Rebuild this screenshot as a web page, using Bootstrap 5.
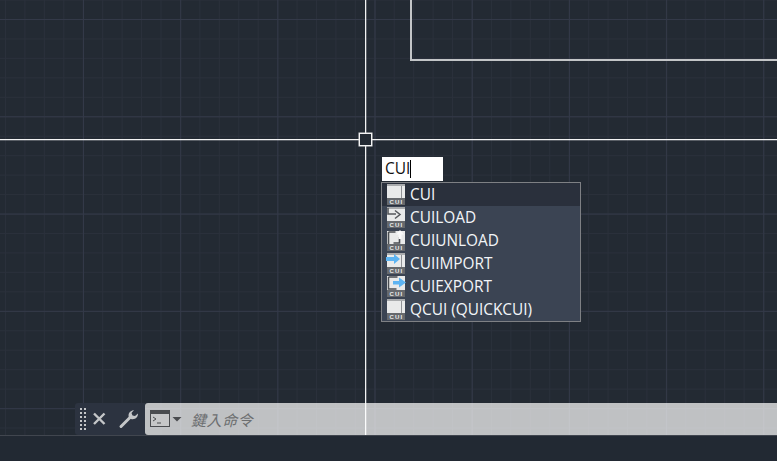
<!DOCTYPE html>
<html lang="zh-Hant">
<head>
<meta charset="utf-8">
<title>CUI</title>
<link href="https://cdn.jsdelivr.net/npm/bootstrap@5.3.0/dist/css/bootstrap.min.css" rel="stylesheet">
<style>
html,body{height:100%;margin:0;overflow:hidden;background:#222933}
body{font-family:"Open Sans","Noto Sans",sans-serif}
.cad-canvas{height:435px;position:relative;overflow:hidden;background-color:#232a33;
 background-image:
  linear-gradient(to right,#333948 1px,transparent 1px),
  linear-gradient(to bottom,#333948 1px,transparent 1px),
  linear-gradient(to right,#2a303b 1px,transparent 1px),
  linear-gradient(to bottom,#2a303b 1px,transparent 1px);
 background-size:97.2px 100%,100% 97.3px,19.44px 100%,100% 19.46px;
 background-position:83px 0,0 19px,5px 0,0 19px}
.cad-status{height:26px;background:#222933;border-top:1px solid #41464f}
.cad-rect{position:absolute;left:410px;top:-4px;width:400px;height:65px;border:2px solid #c3c5c7}
.cross-h{position:absolute;left:0;right:0;top:139px;height:1px;background:#f2f3f3;box-shadow:0 1px 0 rgba(255,255,255,.25)}
.cross-v{position:absolute;top:0;bottom:0;left:365px;width:1px;background:#f2f3f3;box-shadow:1px 0 0 rgba(255,255,255,.25)}
.pick-box{position:absolute;left:359px;top:133px;width:13px;height:13px;border:1px solid #f4f4f4;background:#232a33;box-shadow:0 0 0 .5px #dfe0e1}
.dyn-input{position:absolute;left:382px;top:157px;width:61px;height:24px;background:#fff;color:#111;font-size:15.5px;line-height:23px;padding-left:3px}
.dyn-input i{display:inline-block;width:1px;height:18px;background:#000;vertical-align:-4px}
.suggest{position:absolute;left:381px;top:182px;width:200px;height:140px;border:1px solid #7e8084;border-radius:0;background:#3b4453;--bs-list-group-bg:transparent;overflow:hidden}
.suggest .list-group-item{height:23px;padding:0 0 0 4px;border:0;background:transparent;color:#f2f5f8;font-size:15.4px;line-height:23px;display:flex;align-items:center;gap:4px}
.suggest .list-group-item.on{background:#2a303c}
.suggest svg{flex:none;display:block}
.cad-cmd{position:absolute;left:75px;right:0;top:403px;height:32px;display:flex}
.cmd-handle{width:70px;background:#2c3340;border-radius:3px 0 0 3px;position:relative;flex:none}
.cmd-handle svg{position:absolute;left:0;top:0}
.cmd-field{flex:1;background:rgba(255,255,255,.71);border-radius:3px 0 0 3px;display:flex;align-items:center;padding-left:5px}
.cmd-hint{font-family:"Noto Sans CJK TC","Noto Sans",sans-serif;font-style:italic;font-size:15px;letter-spacing:.6px;color:#6c6e70;margin-left:9px;line-height:1}
.cui-tag{font:700 6px "Liberation Sans",sans-serif;letter-spacing:1.2px;fill:#eceded}
</style>
</head>
<body>
<main class="cad-canvas">
 <div class="cad-rect"></div>
 <div class="cross-h"></div>
 <div class="cross-v"></div>
 <div class="pick-box"></div>
 <div class="dyn-input">CUI<i></i></div>
 <ul class="list-group suggest">
  <li class="list-group-item on"><svg width="20" height="21"><rect x="1" y="0" width="18" height="14" fill="#e9eaea"/><rect x="1" y="0" width="18" height="2" fill="#a9abad"/><rect x="15" y="2" width="1" height="12" fill="#8f9195"/><rect x="1" y="14" width="18" height="7" fill="#66696d"/><text x="3.500" y="19.500" class="cui-tag">CUI</text></svg>CUI</li>
  <li class="list-group-item"><svg width="20" height="21"><rect x="1" y="0" width="18" height="14" fill="#e9eaea"/><rect x="1" y="0" width="18" height="2" fill="#a9abad"/><rect x="1" y="14" width="18" height="7" fill="#66696d"/><text x="3.500" y="19.500" class="cui-tag">CUI</text><path d="M2 1v6h8" fill="none" stroke="#55585c" stroke-width="1.600"/><path d="M9 3.500 14 7.500 9 11.500" fill="none" stroke="#55585c" stroke-width="1.500"/></svg>CUILOAD</li>
  <li class="list-group-item"><svg width="20" height="21"><rect x="1" y="1" width="18" height="13" fill="#e9eaea"/><rect x="1" y="14" width="18" height="7" fill="#66696d"/><text x="3.500" y="19.500" class="cui-tag">CUI</text><path d="M2.500 2h7M2.500 2v12M7.500 13h6V7" fill="none" stroke="#4a4d52" stroke-width="1.600"/><path d="M14 0l4 4.500h-8z" fill="#fafafa"/><rect x="12.500" y="4" width="3" height="5" fill="#fafafa"/></svg>CUIUNLOAD</li>
  <li class="list-group-item"><svg width="20" height="21"><rect x="1" y="0" width="18" height="14" fill="#e9eaea"/><rect x="1" y="0" width="18" height="2" fill="#a9abad"/><rect x="15" y="2" width="1" height="12" fill="#8f9195"/><rect x="1" y="14" width="18" height="7" fill="#66696d"/><text x="3.500" y="19.500" class="cui-tag">CUI</text><rect x="0" y="4" width="9" height="4" fill="#5db4f2"/><path d="M8 1l6 5-6 5z" fill="#5db4f2"/></svg>CUIIMPORT</li>
  <li class="list-group-item"><svg width="20" height="21"><rect x="1" y="0" width="18" height="14" fill="#e9eaea"/><rect x="1" y="14" width="18" height="7" fill="#66696d"/><text x="3.500" y="19.500" class="cui-tag">CUI</text><path d="M2.500 1v12h8M2.500 1h9" fill="none" stroke="#4a4d52" stroke-width="1.500"/><rect x="7" y="5" width="8" height="3.500" fill="#5db4f2"/><path d="M13 1.500l7 5-7 5z" fill="#5db4f2"/></svg>CUIEXPORT</li>
  <li class="list-group-item"><svg width="20" height="21"><rect x="1" y="0" width="18" height="14" fill="#e9eaea"/><rect x="1" y="0" width="18" height="2" fill="#a9abad"/><rect x="15" y="2" width="1" height="12" fill="#8f9195"/><rect x="1" y="14" width="18" height="7" fill="#66696d"/><text x="3.500" y="19.500" class="cui-tag">CUI</text></svg>QCUI (QUICKCUI)</li>
 </ul>
 <div class="cad-cmd">
  <div class="cmd-handle">
   <svg width="70" height="32" viewBox="0 0 70 32">
    <g fill="#c4c6c8">
     <rect x="5" y="5" width="2" height="2"/><rect x="9" y="5" width="2" height="2"/>
     <rect x="5" y="9" width="2" height="2"/><rect x="9" y="9" width="2" height="2"/>
     <rect x="5" y="13" width="2" height="2"/><rect x="9" y="13" width="2" height="2"/>
     <rect x="5" y="17" width="2" height="2"/><rect x="9" y="17" width="2" height="2"/>
     <rect x="5" y="21" width="2" height="2"/><rect x="9" y="21" width="2" height="2"/>
     <rect x="5" y="25" width="2" height="2"/><rect x="9" y="25" width="2" height="2"/>
    </g>
    <path d="M19 10.500l10.500 10.500M29.500 10.500L19 21" stroke="#c4c6c8" stroke-width="2.400" fill="none"/>
    <path d="M46 23.500l10-10" stroke="#c4c6c8" stroke-width="3" stroke-linecap="round" fill="none"/>
    <path d="M54 14.500c-1.200-3 0-6.500 5-7.500l-2.500 3 1 2.500 2.500.5 3-2.500c0 3.500-2.500 6.500-7 5.500z" fill="#c4c6c8"/>
   </svg>
  </div>
  <div class="cmd-field">
   <svg width="32" height="18" viewBox="0 0 32 18">
    <rect x=".5" y=".5" width="19" height="16" fill="#c6c7c8" stroke="#4a4c4f"/>
    <rect x="1" y="1" width="18" height="3" fill="#4a4c4f"/>
    <path d="M3 7l3 2-3 2M7 13h4" stroke="#4a4c4f" stroke-width="1" fill="none"/>
    <path d="M22.500 7h9l-4.500 4.500z" fill="#4a4c4f"/>
   </svg>
   <span class="cmd-hint">鍵入命令</span>
  </div>
 </div>
</main>
<footer class="cad-status"></footer>
</body>
</html>
